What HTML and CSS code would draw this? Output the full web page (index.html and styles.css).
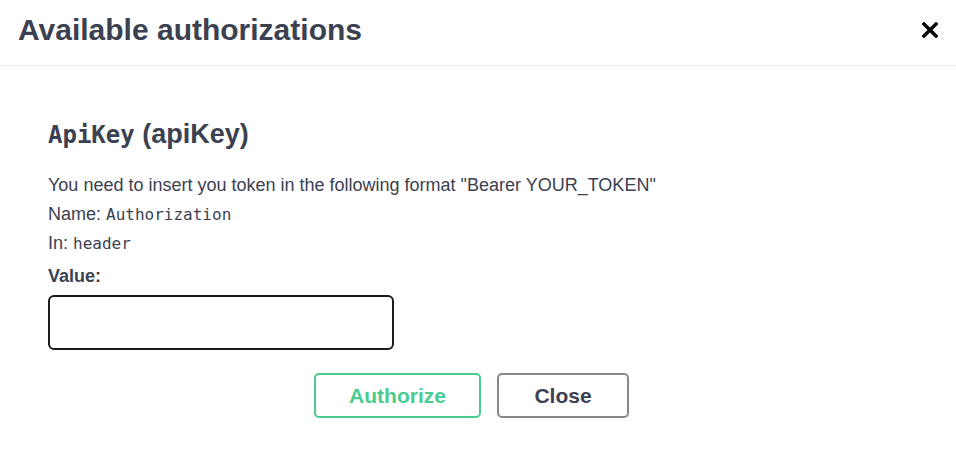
FILE: index.html
```html
<!DOCTYPE html>
<html lang="en">
<head>
<meta charset="UTF-8">
<meta name="viewport" content="width=device-width, initial-scale=1.0">
<title>Available authorizations</title>
<link rel="stylesheet" href="styles.css">
</head>
<body>

<div class="modal">
    <div class="modal-header">
        <h3>Available authorizations</h3>
        <button class="close-modal" aria-label="Close">
            <svg width="16" height="16" viewBox="0 0 16 16">
                <path d="M2 2 L14 14 M14 2 L2 14" stroke="#000" stroke-width="3.4" stroke-linecap="square"/>
            </svg>
        </button>
    </div>

    <div class="modal-body">
        <!-- Api key block -->
        <div class="auth-container">
            <h4><code>ApiKey</code> (apiKey)</h4>
            <p class="desc">You need to insert you token in the following format "Bearer YOUR_TOKEN"</p>
            <p class="meta">Name: <code>Authorization</code></p>
            <p class="meta">In: <code>header</code></p>
            <label for="apiKeyValue">Value:</label>
            <input type="text" id="apiKeyValue">
        </div>

        <div class="auth-btn-wrapper">
            <button class="btn authorize">Authorize</button>
            <button class="btn btn-close">Close</button>
        </div>
    </div>
</div>

</body>
</html>
```

FILE: styles.css
```css
body {
    font-family: "Liberation Sans", Arial, sans-serif;
    margin: 0;
    padding: 0;
    background-color: #fff;
    color: #3b4151;
}

.modal-header {
    display: flex;
    justify-content: space-between;
    align-items: center;
    height: 65px;
    padding: 0 18px;
    border-bottom: 1px solid #ebebeb;
}

.modal-header h3 {
    margin: 0;
    font-size: 30px;
    font-weight: bold;
    color: #3b4151;
    padding-bottom: 6px;
}

.close-modal {
    background: none;
    border: none;
    padding: 0;
    margin-bottom: 6px;
    cursor: pointer;
    display: flex;
}

.modal-body {
    padding: 52px 48px 0;
}

.auth-container h4 {
    margin: 0 0 20px;
    font-size: 27px;
    font-weight: bold;
    line-height: 32px;
}

.auth-container code {
    font-family: "DejaVu Sans Mono", monospace;
}

.auth-container h4 code {
    font-size: 24px;
}

.desc,
.meta {
    margin: 0;
    font-size: 18px;
    line-height: 29px;
}

.meta code {
    font-size: 16px;
}

label {
    display: block;
    margin-top: 6px;
    font-size: 18px;
    font-weight: bold;
    line-height: 24px;
}

input {
    display: block;
    box-sizing: border-box;
    width: 346px;
    height: 55px;
    margin-top: 7px;
    border: 2px solid #1b1b1b;
    border-radius: 6px;
    font-size: 16px;
    padding: 0 10px;
}

.auth-btn-wrapper {
    display: flex;
    justify-content: center;
    gap: 16px;
    margin-top: 23px;
    padding-right: 13px;
}

.btn {
    box-sizing: border-box;
    height: 45px;
    background-color: #fff;
    border-radius: 5px;
    font-family: "Liberation Sans", Arial, sans-serif;
    font-size: 21px;
    font-weight: bold;
    cursor: pointer;
}

.authorize {
    width: 167px;
    border: 2px solid #49cc90;
    color: #49cc90;
}

.btn-close {
    width: 132px;
    border: 2px solid #888;
    color: #3b4151;
}
```
